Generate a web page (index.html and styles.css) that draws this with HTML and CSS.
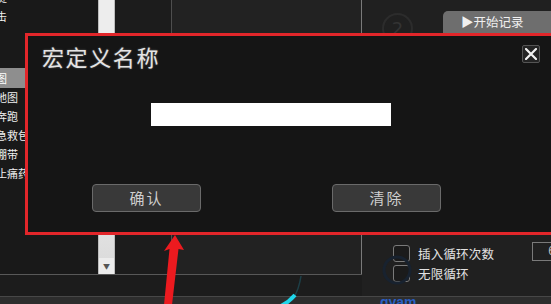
FILE: index.html
```html
<!DOCTYPE html>
<html lang="zh-CN">
<head>
<meta charset="utf-8">
<title>宏定义名称</title>
<link rel="stylesheet" href="styles.css">
</head>
<body>
<div class="screen">
  <div class="app">
    <div class="body">
      <div class="leftcol">
        <div class="upper">
          <div class="list">
            <div class="row">键</div>
            <div class="row">击</div>
            <div class="row"></div>
            <div class="row"></div>
            <div class="spacer"></div>
            <div class="row sel">图</div>
            <div class="row">地图</div>
            <div class="row">奔跑</div>
            <div class="row">急救包</div>
            <div class="row">绷带</div>
            <div class="row">止痛药</div>
          </div>
          <div class="scroll">
            <div class="thumb"></div>
            <div class="track"></div>
            <div class="down">&#9660;</div>
          </div>
          <div class="mid"></div>
          <div class="main"></div>
        </div>
        <div class="gap"></div>
      </div>
      <div class="rightcol">
        <div class="toolbar">
          <span class="badge">2</span>
          <div class="record">&#9654;开始记录</div>
        </div>
        <div class="options">
          <div class="opt"><span class="box"></span><span class="opt-text">插入循环次数</span><span class="num">6</span></div>
          <div class="opt"><span class="box"></span><span class="opt-text">无限循环</span></div>
        </div>
      </div>
    </div>
    <div class="footer"></div>
  </div>

  <svg class="deco" width="551" height="304" viewBox="0 0 551 304">
    <circle cx="397" cy="270" r="13" fill="none" stroke="#18222f" stroke-width="3"/>
    <path d="M301 276 Q299 289 294 297" fill="none" stroke="#1d3f47" stroke-width="1.5"/>
    <path d="M295 295 Q289 302 281 306" fill="none" stroke="#1fd6ea" stroke-width="4"/>
    <text x="380" y="307" class="brand">gyam</text>
  </svg>

  <div class="dialog">
    <div class="dlg-head">
      <div class="dlg-title">宏定义名称</div>
      <div class="close">
        <svg width="12" height="12" viewBox="0 0 12 12"><path d="M1 1 L11 11 M11 1 L1 11" stroke="#f2f2f2" stroke-width="2.2" stroke-linecap="round"/></svg>
      </div>
    </div>
    <div class="dlg-input"></div>
    <div class="dlg-buttons">
      <div class="btn">确认</div>
      <div class="btn">清除</div>
    </div>
  </div>

  <svg class="arrow" width="551" height="304" viewBox="0 0 551 304">
    <polygon points="175,235 184,250 178.5,249 172,305 164,305 169.5,249 164,251" fill="#ec1a1f"/>
  </svg>
</div>
</body>
</html>
```

FILE: styles.css
```css
* { box-sizing: border-box; }
html, body { margin: 0; padding: 0; background: #1e1e1e; }
body { font-family: "Noto Sans CJK SC", "Noto Sans", sans-serif; }

.screen {
  position: relative;
  width: 551px;
  height: 304px;
  overflow: hidden;
  background: #1f1f1f;
}

.app { display: flex; flex-direction: column; width: 551px; height: 304px; }
.body { display: flex; height: 296px; }

.leftcol { width: 362px; display: flex; flex-direction: column; }
.upper {
  height: 275px;
  display: flex;
  border-bottom: 1px solid #585858;
}
.gap { flex: 1; background: #1c1c1c; }

.list {
  width: 98px;
  background: #191919;
  overflow: hidden;
  margin-top: -12px;
}
.row {
  height: 19px;
  line-height: 19px;
  font-size: 11px;
  color: #f0f0f0;
  margin-left: -4px;
  white-space: nowrap;
}
.spacer { height: 4px; }
.row.sel { height: 20px; line-height: 20px; background: #8e8e8e; color: #fff; margin-left: 0; text-indent: -4px; }

.scroll {
  width: 17px;
  background: #d9d9d9;
  border-left: 1px solid #bdbdbd;
  border-right: 1px solid #bdbdbd;
  display: flex;
  flex-direction: column;
}
.thumb { height: 40px; background: #ededed; }
.track { flex: 1; background: linear-gradient(#d4d4d4, #e9e9e9 70%, #dcdcdc); }
.down {
  height: 16px;
  font-size: 7px;
  line-height: 16px;
  text-align: center;
  color: #555;
  background: #ececec;
}

.mid { width: 57px; background: #1c1c1c; border-right: 1px solid #4e4e4e; }
.main { flex: 1; background: #222222; border-right: 1px solid #7a7a7a; }

.rightcol {
  flex: 1;
  background: #202020;
  overflow: hidden;
  display: flex;
  flex-direction: column;
}
.toolbar {
  display: flex;
  align-items: flex-start;
  padding-top: 11px;
  height: 33px;
}
.badge {
  width: 31px;
  height: 31px;
  margin-left: 20px;
  margin-top: 2px;
  border: 2px solid #2c2c2c;
  border-radius: 50%;
  color: #333;
  font-family: "DejaVu Sans", sans-serif;
  font-size: 18px;
  line-height: 27px;
  text-align: center;
}
.record {
  margin-left: auto;
  width: 108px;
  height: 22px;
  background: #6e6e6e;
  border-top-left-radius: 5px;
  color: #f0f0f0;
  font-size: 12.5px;
  line-height: 22px;
  padding-left: 18px;
  white-space: nowrap;
}

.options {
  margin-top: 212px;
  padding-left: 31px;
  display: flex;
  flex-direction: column;
  gap: 3px;
}
.opt {
  display: flex;
  align-items: center;
  height: 17px;
  white-space: nowrap;
}
.box {
  width: 17px;
  height: 17px;
  border: 1.5px solid #7a7a7a;
  border-radius: 3px;
  background: #1b1b1b;
  flex: none;
}
.opt-text {
  margin-left: 8px;
  font-size: 12.5px;
  color: #e2e2e2;
  letter-spacing: 0.2px;
}
.num {
  margin-left: 38px;
  margin-top: -4px;
  width: 40px;
  height: 19px;
  border: 1px solid #7a7a7a;
  color: #bbb;
  font-family: "Liberation Sans", sans-serif;
  font-size: 12px;
  line-height: 17px;
  padding-left: 15px;
  flex: none;
}

.footer {
  height: 8px;
  background: #2d2d2d;
  border-top: 1px solid #474747;
}

.deco { position: absolute; left: 0; top: 0; pointer-events: none; }
.brand {
  font-family: "Liberation Sans", sans-serif;
  font-weight: bold;
  font-size: 14px;
  fill: #2a5fc4;
}

.dialog {
  position: absolute;
  left: 25px;
  top: 33px;
  width: 540px;
  height: 202px;
  border: 3px solid #e2262a;
  background: #151515;
  display: flex;
  flex-direction: column;
}
.dlg-head {
  display: flex;
  align-items: flex-start;
  padding: 8px 22px 0 14px;
  height: 32px;
}
.dlg-title {
  font-size: 22px;
  line-height: 24px;
  letter-spacing: 1.6px;
  color: #e4e4e4;
  text-shadow: 0 0 2px rgba(200,200,200,0.5);
}
.close {
  margin-left: auto;
  margin-top: 1px;
  width: 18px;
  height: 18px;
  border: 1px solid #555;
  border-radius: 2px;
  background: #242424;
  display: flex;
  align-items: center;
  justify-content: center;
}
.dlg-input {
  margin-top: 35px;
  margin-left: 123px;
  width: 240px;
  height: 23px;
  background: #ffffff;
}
.dlg-buttons {
  margin-top: 58px;
  margin-left: 64px;
  display: flex;
  gap: 131px;
}
.btn {
  width: 109px;
  height: 28px;
  background: #393939;
  border: 1px solid #6a6a6a;
  border-radius: 4px;
  color: #cfcfcf;
  font-size: 15px;
  line-height: 26px;
  letter-spacing: 2px;
  text-align: center;
}

.arrow { position: absolute; left: 0; top: 0; pointer-events: none; }
```
